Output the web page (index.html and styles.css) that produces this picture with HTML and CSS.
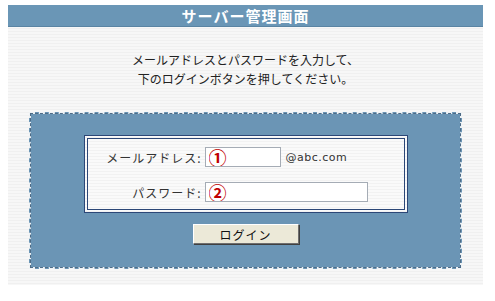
FILE: index.html
```html
<!DOCTYPE html>
<html lang="ja">
<head>
  <meta charset="UTF-8">
  <title>サーバー管理画面</title>
  <link rel="stylesheet" href="styles.css">
</head>
<body>
  <div class="page">
    <h1 class="title">サーバー管理画面</h1>
    <p class="intro">メールアドレスとパスワードを入力して、<br>下のログインボタンを押してください。</p>
    <div class="panel">
      <form class="login">
        <div class="fields">
          <div class="row">
            <label for="mail">メールアドレス:</label>
            <input type="text" id="mail" class="mail" value="①">
            <span class="domain">@abc.com</span>
          </div>
          <div class="row">
            <label for="pass">パスワード:</label>
            <input type="text" id="pass" class="pass" value="②">
          </div>
        </div>
        <button type="button" class="submit">ログイン</button>
      </form>
    </div>
  </div>
</body>
</html>
```

FILE: styles.css
```css
body {
  margin: 0;
  padding: 5px 12px 0 8px;
  background: #fff;
  font-family: "Noto Sans CJK JP", "DejaVu Sans", sans-serif;
  color: #333;
}

.page {
  width: 475px;
  height: 280px;
  background: repeating-linear-gradient(to bottom, #f7f7f7 0, #f7f7f7 2px, #f0f0f0 2px, #f0f0f0 3px);
}

.title {
  margin: 0;
  height: 21px;
  line-height: 21px;
  background: #6a96b6;
  border-bottom: 1px solid #5a84a3;
  color: #fff;
  font-size: 15px;
  font-weight: bold;
  text-align: center;
  letter-spacing: 1px;
}

.intro {
  margin: 0;
  padding-top: 23px;
  height: 62px;
  font-size: 12px;
  line-height: 19px;
  text-align: center;
  color: #222;
}

.panel {
  margin: 0 21px;
  padding-top: 21px;
  box-sizing: border-box;
  height: 157px;
  background: #6b95b5;
  border: 2px dashed #eef2f5;
  outline: 1px dashed #4d6b86;
  outline-offset: -2px;
}

.login {
  display: flex;
  flex-direction: column;
  align-items: center;
}

.fields {
  width: 324px;
  height: 78px;
  box-sizing: border-box;
  border: 4px double #2c4777;
  background: repeating-linear-gradient(to bottom, #fafafa 0, #fafafa 2px, #f2f2f2 2px, #f2f2f2 3px);
  padding-top: 8px;
}

.row {
  display: flex;
  align-items: center;
  height: 20px;
  margin-bottom: 15px;
}

.row label {
  width: 114px;
  text-align: right;
  font-size: 12px;
  letter-spacing: 1px;
  color: #333;
  padding-right: 3px;
}

.row input {
  height: 20px;
  box-sizing: border-box;
  border: 1px solid #a5acb5;
  background: #fff;
  color: #c00000;
  font-family: "Noto Sans CJK JP", serif;
  font-size: 18px;
  font-weight: bold;
  padding: 0 3px;
  margin: 0;
  outline: none;
}

.mail {
  width: 76px;
}

.pass {
  width: 163px;
}

.domain {
  margin-left: 5px;
  font-family: "DejaVu Sans", sans-serif;
  font-size: 11px;
  letter-spacing: 0.5px;
  color: #333;
}

.submit {
  margin-top: 11px;
  width: 106px;
  height: 20px;
  background: #ece9d8;
  border: 1px solid #6f6f6f;
  border-top-color: #fff;
  border-left-color: #fff;
  box-shadow: 1px 1px 0 #404040;
  font-family: "Noto Sans CJK JP", sans-serif;
  font-size: 12px;
  letter-spacing: 1px;
  color: #111;
  padding: 0;
}
```
